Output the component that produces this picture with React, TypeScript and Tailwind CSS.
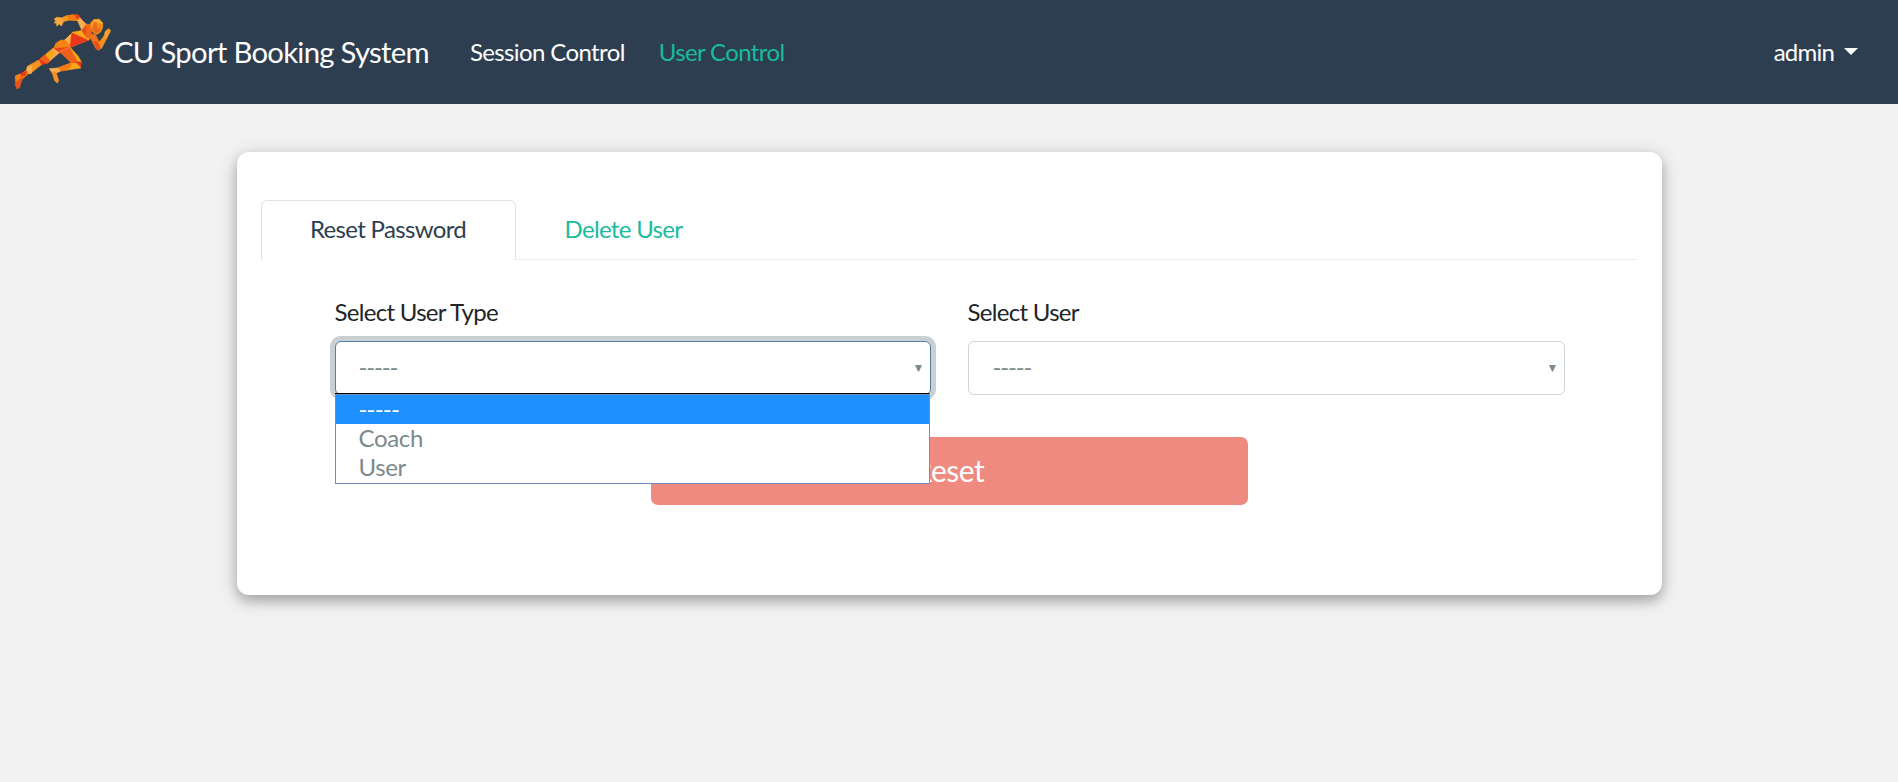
const RUNNER: [string, string][] = [
  // rear arm
  ['#f39a1c', '230,44 200,47 184,54 186,66 208,60 232,62'],
  ['#f9a73e', '186,54 170,52 162,58 168,62 162,68 170,70 170,78 178,72 184,78 190,66'],
  ['#e8401c', '222,44 236,45 248,64 238,66'],
  ['#f9ad4c', '232,60 240,54 260,74 246,92 '],
  ['#f57c14', '200,47 220,45 232,60 208,60'],
  // torso
  ['#f58a12', '260,72 244,92 216,100 192,122 210,142 266,120 274,104 270,74'],
  ['#fbb04e', '216,100 192,122 210,141'],
  ['#e8371a', '216,97 266,120 210,142'],
  ['#f9a61a', '246,92 216,97 266,120 272,100'],
  ['#ea4a18', '246,92 260,74 260,112'],
  ['#f0661b', '260,74 274,76 272,116 258,110'],
  // head
  ['#f7931e', '272,68 282,59 296,58 308,68 308,82 302,96 290,103 278,96 272,84'],
  ['#fbaa30', '280,60 298,58 308,72 288,72'],
  ['#e96a1a', '286,66 302,76 298,96 284,98 276,88'],
  ['#f28a1a', '290,70 304,74 294,88'],
  // front arm
  ['#f0741a', '268,108 284,100 300,130 306,142 296,151 288,146'],
  ['#e9531b', '282,124 298,128 304,140 296,150 288,144'],
  ['#f58f1d', '296,128 312,108 322,112 304,146'],
  ['#f9a030', '312,110 316,94 326,86 332,92 328,100 320,114'],
  // hips
  ['#f58413', '160,148 168,130 182,120 198,122 212,142 184,146'],
  ['#e8401a', '160,146 212,142 180,160 166,158'],
  ['#fbae56', '180,154 208,142 214,188'],
  ['#f0601a', '208,142 230,170 242,186 214,188 180,156'],
  ['#f9a61a', '210,142 234,168 244,186 232,182'],
  // bent leg
  ['#e8371a', '214,188 244,186 242,204 226,192'],
  ['#f9a61a', '214,188 230,190 242,204 200,210 196,196'],
  ['#f57c14', '198,194 216,190 204,210 178,214 172,204'],
  ['#fbb04e', '148,206 174,204 180,214 166,220 156,218'],
  ['#f7931e', '156,216 168,216 176,242 172,249 164,242'],
  // extended leg
  ['#f9a61a', '160,144 168,160 150,182 132,180 138,162'],
  ['#fbae56', '160,146 178,158 148,184 166,160'],
  ['#e8371a', '124,172 140,178 146,188 112,198 114,184'],
  ['#f0601a', '134,164 150,182 142,190 120,178'],
  ['#f7931e', '84,198 116,180 124,194 92,220 80,220'],
  ['#fbb04e', '82,200 96,196 94,220 76,222'],
  ['#f57c14', '66,220 80,210 84,222 66,238'],
  ['#e8371a', '60,222 80,214 76,226 62,230'],
  ['#e9531b', '46,228 64,222 66,240 58,264 50,266 46,254'],
  ['#f58413', '46,228 60,222 62,234 48,244'],
];

function Logo() {
  return (
    <svg className="h-[104px] w-[114px] shrink-0" viewBox="0 0 342 312" aria-hidden="true">
      {RUNNER.map(([fill, points]) => (
        <polygon key={points} points={points} fill={fill} stroke={fill} strokeWidth="2" strokeLinejoin="round" />
      ))}
    </svg>
  );
}

function SelectBox({ label, open }: { label: string; open?: boolean }) {
  return (
    <div className={open ? 'relative w-[596px]' : 'relative w-[597px]'}>
      <div className="mb-[11px] text-[24px] leading-[36px] tracking-[-0.7px] text-[#212529]">{label}</div>
      <div
        className={
          open
            ? 'flex h-[54px] items-center justify-between rounded-[6px] border border-[#597ea2] bg-white pr-[8px] pl-[23px] text-[24px] text-[#7b8a8b] shadow-[0_0_0_5px_#cacfd3]'
            : 'flex h-[54px] items-center justify-between rounded-[6px] border border-[#ced4da] bg-white pr-[8px] pl-[24px] text-[24px] text-[#7b8a8b]'
        }
      >
        <span className="pb-[2px] tracking-[-1.15px]">-----</span>
        <svg className="h-[7px] w-[7px]" viewBox="0 0 7 7" fill="#7b8a8b">
          <path d="M0 0h7L4 6.5H3z" />
        </svg>
      </div>
      {open && (
        <div className="absolute top-[99px] left-0 z-10 w-[595px] border border-t-0 border-[#6f8fc0] bg-white text-[24px] text-[#7b8a8b]">
          <div className="-ml-px h-px bg-black" />
          <div className="h-px bg-[#6f8fc0]" />
          <div className="h-[29px] bg-[#1e90ff] pl-[23px] leading-[27px] tracking-[-0.8px] text-white">-----</div>
          <div className="h-[29px] pl-[23px] leading-[27px] tracking-[-0.35px]">Coach</div>
          <div className="h-[30px] pl-[23px] leading-[27px] tracking-[-0.35px]">User</div>
        </div>
      )}
    </div>
  );
}

export default function App() {
  return (
    <div className="min-h-screen bg-[#f2f2f2] font-['Lato',sans-serif]">
      <header className="flex h-[104px] items-center bg-[#2c3e50] pr-[40px] text-[24px] tracking-[-0.62px] text-white">
        <Logo />
        <span className="text-[29.3px] tracking-[-0.72px] whitespace-nowrap">CU Sport Booking System</span>
        <nav className="ml-[41px] flex flex-1 gap-[34px] pb-[1px]">
          <span>Session Control</span>
          <span className="text-[#18bc9c]">User Control</span>
        </nav>
        <span className="pb-[1px] tracking-[-0.8px]">admin</span>
        <svg className="mb-[2px] ml-[10px] h-[7px] w-[14px]" viewBox="0 0 14 7" fill="white">
          <path d="M0 0h14L7 7z" />
        </svg>
      </header>
      <main className="mx-auto mt-[48px] h-[443px] w-[1425px] rounded-[12px] bg-white px-[24px] pt-[48px] shadow-[0_6px_12px_rgba(0,0,0,0.2),0_4px_20px_rgba(0,0,0,0.19)]">
        <div className="flex h-[60px] border-b border-[#ecf0f1] text-[24px] tracking-[-0.67px]">
          <div className="flex h-[60px] w-[255px] items-center justify-center rounded-t-[6px] border border-b-0 border-[#dee2e6] bg-white pb-[4px] text-[#2c3e50]">
            Reset Password
          </div>
          <div className="flex items-center pb-[2px] pl-[49px] text-[#18bc9c]">Delete User</div>
        </div>
        <div className="mt-[34px] flex gap-[37px] pl-[74px]">
          <SelectBox label="Select User Type" open />
          <SelectBox label="Select User" />
        </div>
        <button className="mx-auto mt-[42px] flex h-[68px] w-[597px] items-center justify-center rounded-[7px] bg-[#ef8a80] pb-[2px] text-[30px] tracking-[-0.5px] text-white">
          Reset
        </button>
      </main>
    </div>
  );
}
